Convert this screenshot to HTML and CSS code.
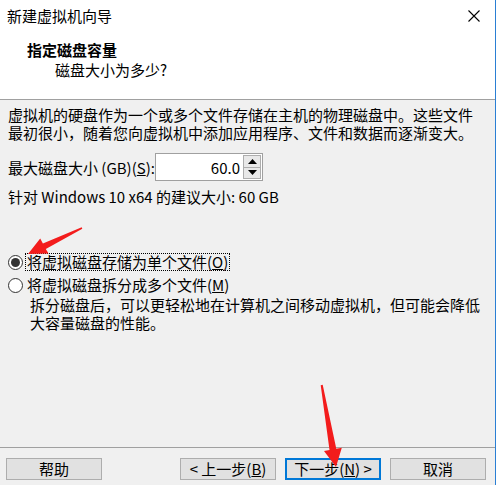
FILE: index.html
```html
<!DOCTYPE html>
<html lang="zh-CN">
<head>
<meta charset="utf-8">
<title>新建虚拟机向导</title>
<link rel="stylesheet" href="styles.css">
</head>
<body>
<div class="window">
  <div class="top">
    <div class="titlebar">
      <span class="title">新建虚拟机向导</span>
      <svg class="close" width="12" height="12" viewBox="0 0 12 12"><path d="M0.5 0.5 L11.5 11.5 M11.5 0.5 L0.5 11.5" stroke="#000" stroke-width="1.1" fill="none"/></svg>
    </div>
    <div class="header">
      <div class="h-title">指定磁盘容量</div>
      <div class="h-sub">磁盘大小为多少?</div>
    </div>
  </div>
  <div class="content">
    <p class="intro">虚拟机的硬盘作为一个或多个文件存储在主机的物理磁盘中。这些文件<br>最初很小，随着您向虚拟机中添加应用程序、文件和数据而逐渐变大。</p>
    <div class="size-row">
      <span class="label">最大磁盘大小 (GB)(<u>S</u>):</span>
      <div class="spin">
        <span class="spin-value">60.0</span>
        <div class="spin-btns">
          <span class="spin-btn"><svg width="9" height="5" viewBox="0 0 9 5"><path d="M0 5 L4.5 0 L9 5 Z" fill="#000"/></svg></span>
          <span class="spin-btn"><svg width="9" height="5" viewBox="0 0 9 5"><path d="M0 0 L4.5 5 L9 0 Z" fill="#000"/></svg></span>
        </div>
      </div>
    </div>
    <p class="suggest">针对 Windows 10 x64 的建议大小: 60 GB</p>
    <div class="radio-row first">
      <span class="radio checked"></span>
      <span class="rlabel focus">将虚拟磁盘存储为单个文件(<u>O</u>)</span>
    </div>
    <div class="radio-row second">
      <span class="radio"></span>
      <span class="rlabel">将虚拟磁盘拆分成多个文件(<u>M</u>)</span>
    </div>
    <p class="desc">拆分磁盘后，可以更轻松地在计算机之间移动虚拟机，但可能会降低<br>大容量磁盘的性能。</p>
  </div>
  <div class="footer">
    <button class="btn">帮助</button>
    <button class="btn push">&lt; 上一步(<u>B</u>)</button>
    <button class="btn default">下一步(<u>N</u>) &gt;</button>
    <button class="btn">取消</button>
  </div>
  <svg class="annot" width="496" height="485" viewBox="0 0 496 485">
    <polygon fill="#f31c1c" points="28,254 48.5,253.6 45.8,249.1 82.3,228.7 81.7,227.3 42.9,243.5 40.2,238.5"/>
    <polygon fill="#f31c1c" points="336,467 341.8,447.7 336.3,448.7 322.7,384.8 320.7,385.2 329.5,449.9 324,450.9"/>
  </svg>
</div>
</body>
</html>
```

FILE: styles.css
```css
* { box-sizing: border-box; }
html, body { margin: 0; padding: 0; }
body {
  font-family: "Noto Sans CJK SC", "Noto Sans", sans-serif;
  font-size: 15px;
  color: #000;
  background: #f0f0f0;
}
.window {
  position: relative;
  width: 496px;
  height: 485px;
  display: flex;
  flex-direction: column;
  background: #f0f0f0;
  border-right: 1px solid #2a7fd4;
}
.top {
  background: #fff;
  height: 100px;
  border-bottom: 1px solid #a0a0a0;
}
.titlebar {
  height: 32px;
  display: flex;
  align-items: center;
  padding-left: 7px;
  padding-right: 15px;
}
.title { flex: 1; line-height: 20px; }
.close { display: block; }
.header { padding-top: 8px; padding-left: 27px; }
.h-title { font-weight: bold; line-height: 20px; }
.h-sub { padding-left: 28px; line-height: 20px; }
.content {
  flex: 1;
  padding: 6px 8px 0 8px;
}
p { margin: 0; }
.intro { line-height: 18px; }
.size-row {
  margin-top: 11px;
  display: flex;
  align-items: center;
  height: 28px;
}
.label { width: 147px; }
.spin {
  width: 108px;
  height: 28px;
  background: #fff;
  border: 1px solid #a0a0a0;
  display: flex;
  align-items: center;
  padding: 1px;
}
.spin-value { flex: 1; text-align: right; padding-right: 3px; }
.spin-btns { display: flex; flex-direction: column; width: 18px; height: 24px; }
.spin-btn {
  flex: 1;
  display: flex;
  align-items: center;
  justify-content: center;
  background: #e8e8e8;
  border: 1px solid #adadad;
}
.spin-btn + .spin-btn { border-top: none; }
.spin-btn svg { display: block; }
.suggest { margin-top: 7px; line-height: 18px; }
.radio-row { display: flex; align-items: center; }
.radio-row.first { margin-top: 44px; height: 24px; }
.radio-row.second { height: 22px; }
.radio {
  width: 15px;
  height: 15px;
  border-radius: 50%;
  border: 1px solid #333;
  background: #fff;
  display: flex;
  align-items: center;
  justify-content: center;
  flex: none;
}
.radio.checked::after {
  content: "";
  width: 9px;
  height: 9px;
  border-radius: 50%;
  background: #333;
}
.rlabel { margin-left: 3px; line-height: 16px; padding: 0 1px; }
.rlabel.focus { outline: 1px dotted #000; }
.desc { padding-left: 22px; line-height: 18px; }
.footer {
  border-top: 1px solid #a0a0a0;
  height: 38px;
  padding: 10px 9px 0 6px;
  display: flex;
  gap: 9px;
}
.btn {
  width: 96px;
  height: 22px;
  background: #e1e1e1;
  border: 1px solid #adadad;
  font-family: inherit;
  font-size: 15px;
  color: #000;
  padding: 0;
  line-height: 18px;
}
.btn.push { margin-left: auto; }
.btn.default { border: 2px solid #0078d7; }
.annot { position: absolute; left: 0; top: 0; pointer-events: none; }
```
